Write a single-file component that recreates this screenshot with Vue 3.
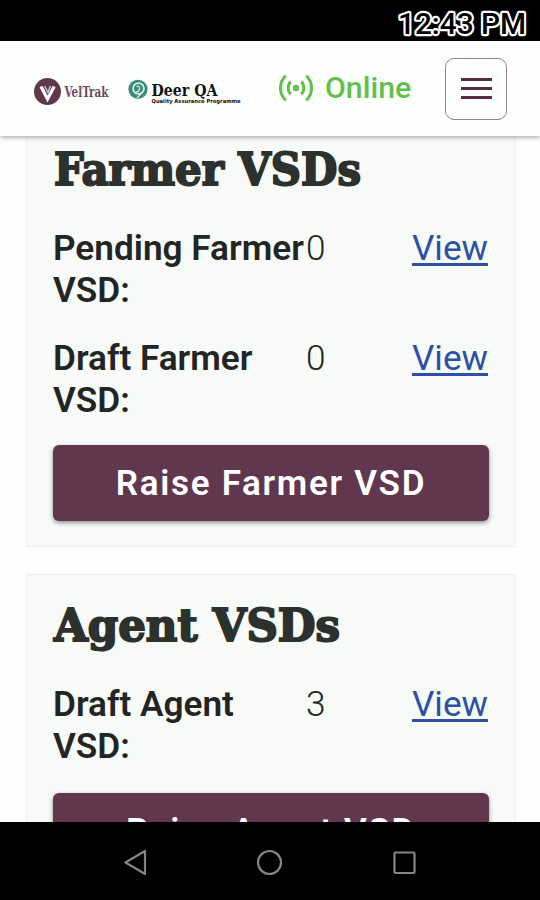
<template>
  <div class="screen">
    <div class="status-bar">
      <svg width="136" height="41" viewBox="0 0 136 41">
        <text class="clock" x="3" y="33.5" textLength="128" lengthAdjust="spacingAndGlyphs">12:43 PM</text>
      </svg>
    </div>

    <header class="app-header">
      <svg class="logos" width="220" height="40" viewBox="30 72 220 40">
        <circle cx="47.5" cy="91.5" r="13.5" fill="#613750" />
        <path d="M41 86.5 L47.5 99 L54.2 86.5" fill="none" stroke="#fff" stroke-width="3.2" />
        <path d="M44.6 86 L48 92.5 L50.3 86" fill="none" stroke="#d9c9d3" stroke-width="1.4" />
        <text class="brand-vel" x="64.5" y="97" textLength="44" lengthAdjust="spacingAndGlyphs">VelTrak</text>
        <circle cx="138" cy="89.3" r="9.6" fill="#3a8a78" />
        <circle cx="138.5" cy="88.5" r="5.4" fill="none" stroke="#d8ebe5" stroke-width="1.8" />
        <path d="M136.5 86.5 q3.5 -1.5 3 2.5 q-.5 3 -3.5 3 M141 94 l-4 4" fill="none" stroke="#d8ebe5" stroke-width="1.3" />
        <text class="brand-deer" x="151.5" y="95.5" textLength="66" lengthAdjust="spacingAndGlyphs">Deer QA</text>
        <text class="brand-sub" x="151.5" y="102.7" textLength="89" lengthAdjust="spacingAndGlyphs">Quality Assurance Programme</text>
      </svg>

      <div class="online">
        <svg width="36" height="30" viewBox="0 0 36 30" fill="none" stroke="#64bf4c" stroke-width="3">
          <circle cx="18" cy="15" r="3.2" fill="#64bf4c" stroke="none" />
          <path d="M12.8 8.6 a9 9 0 0 0 0 12.8 M23.2 8.6 a9 9 0 0 1 0 12.8" />
          <path d="M7.8 2.6 a17 17 0 0 0 0 24.8 M28.2 2.6 a17 17 0 0 1 0 24.8" />
        </svg>
        <span>Online</span>
      </div>

      <button class="menu-btn" aria-label="Menu">
        <i v-for="n in 3" :key="n" />
      </button>
    </header>

    <main class="content">
      <section v-for="card in cards" :key="card.title" class="card">
        <h2>
          <svg width="435" height="50" viewBox="0 0 435 50">
            <text class="title" x="1" y="40" :textLength="card.width" lengthAdjust="spacingAndGlyphs">{{ card.title }}</text>
          </svg>
        </h2>
        <div class="rows">
          <div v-for="row in card.rows" :key="row.label" class="row">
            <strong>{{ row.label }}<br>VSD:</strong>
            <span>{{ row.count }}</span>
            <a href="#">View</a>
          </div>
        </div>
        <button class="raise">{{ card.action }}</button>
      </section>
    </main>

    <nav class="nav-bar">
      <svg width="540" height="78" viewBox="0 0 540 78" fill="none" stroke="#858585" stroke-width="2.2">
        <path d="M145 29 V52 L125.5 40.5 Z" stroke-linejoin="round" />
        <circle cx="269.5" cy="40.5" r="11.5" />
        <rect x="394.5" y="30.5" width="20" height="20.5" rx="1" />
      </svg>
    </nav>
  </div>
</template>

<script setup>
const cards = [
  {
    title: 'Farmer VSDs',
    width: 307,
    rows: [
      { label: 'Pending Farmer', count: 0 },
      { label: 'Draft Farmer', count: 0 },
    ],
    action: 'Raise Farmer VSD',
  },
  {
    title: 'Agent VSDs',
    width: 286,
    rows: [{ label: 'Draft Agent', count: 3 }],
    action: 'Raise Agent VSD',
  },
]
</script>

<style>
body {
  margin: 0;
  background: #000;
}
</style>

<style scoped>
.screen {
  display: flex;
  flex-direction: column;
  width: 540px;
  height: 900px;
  overflow: hidden;
  background: #fdfffd;
  font-family: Roboto, sans-serif;
  color: #222524;
}

svg {
  display: block;
  flex: none;
  overflow: visible;
}

.status-bar {
  display: flex;
  justify-content: flex-end;
  flex: none;
  height: 41px;
  padding-right: 9px;
  background: #000;
}

.clock {
  font-size: 30px;
  font-weight: 500;
  fill: #000;
  stroke: #fff;
  stroke-width: 4.4px;
  stroke-linejoin: round;
  paint-order: stroke;
}

.app-header {
  display: flex;
  align-items: center;
  flex: none;
  box-sizing: border-box;
  height: 95px;
  padding: 0 33px 0 30px;
  background: #fdfffd;
  box-shadow: 0 1px 5px rgba(0, 0, 0, 0.4);
  z-index: 1;
}

.logos {
  margin-top: 7px;
}

.brand-vel {
  font: 600 14px 'DejaVu Serif', serif;
  fill: #704a61;
}

.brand-deer {
  font: 700 17px 'DejaVu Serif', serif;
  fill: #111;
}

.brand-sub {
  font: 700 5.5px 'DejaVu Sans', sans-serif;
  fill: #111;
}

.online {
  display: flex;
  align-items: center;
  gap: 11px;
  margin: -2px 0 0 28px;
  font-size: 30.3px;
  font-weight: 500;
  color: #64bf4c;
}

.menu-btn {
  display: flex;
  flex-direction: column;
  align-items: center;
  justify-content: center;
  gap: 6px;
  box-sizing: border-box;
  width: 62px;
  height: 62px;
  margin-left: auto;
  padding: 0;
  border: 1.5px solid #9c8090;
  border-radius: 9px;
  background: transparent;
}

.menu-btn i {
  width: 31px;
  height: 3px;
  background: #572b48;
}

.content {
  flex: 1;
  min-height: 0;
  overflow: hidden;
  padding: 0 25px 0 26px;
}

.card {
  box-sizing: border-box;
  width: 490px;
  margin-bottom: 27px;
  padding: 26px 26px 25px;
  border: 1px solid #edf0ed;
  background: #f7faf7;
}

.card:first-child {
  padding-top: 9px;
  border-top: 0;
}

h2 {
  margin: 0 0 32px;
}

.title {
  font: 700 44px 'DejaVu Serif', serif;
  fill: #2c312e;
  stroke: #2c312e;
  stroke-width: 2px;
}

.rows {
  display: flex;
  flex-direction: column;
  gap: 26px;
}

.row {
  display: grid;
  grid-template-columns: 253px 1fr auto;
  padding-right: 1px;
  font-size: 35.2px;
  line-height: 42px;
}

.row strong {
  font-weight: 600;
  white-space: nowrap;
}

.row span {
  font-weight: 300;
}

.row a {
  color: #2e50a4;
  text-decoration-thickness: 3px;
  text-underline-offset: 3px;
}

.raise {
  display: block;
  width: 100%;
  height: 76px;
  margin-top: 24px;
  padding: 0;
  border: 0;
  border-radius: 6px;
  background: #613750;
  box-shadow: 0 2px 4px rgba(50, 35, 45, 0.5);
  color: #fff;
  font: 600 35px Roboto, sans-serif;
  letter-spacing: 1.7px;
}

.card:last-child .raise {
  margin-top: 26px;
}

.nav-bar {
  flex: none;
  height: 78px;
  background: #000;
}
</style>
